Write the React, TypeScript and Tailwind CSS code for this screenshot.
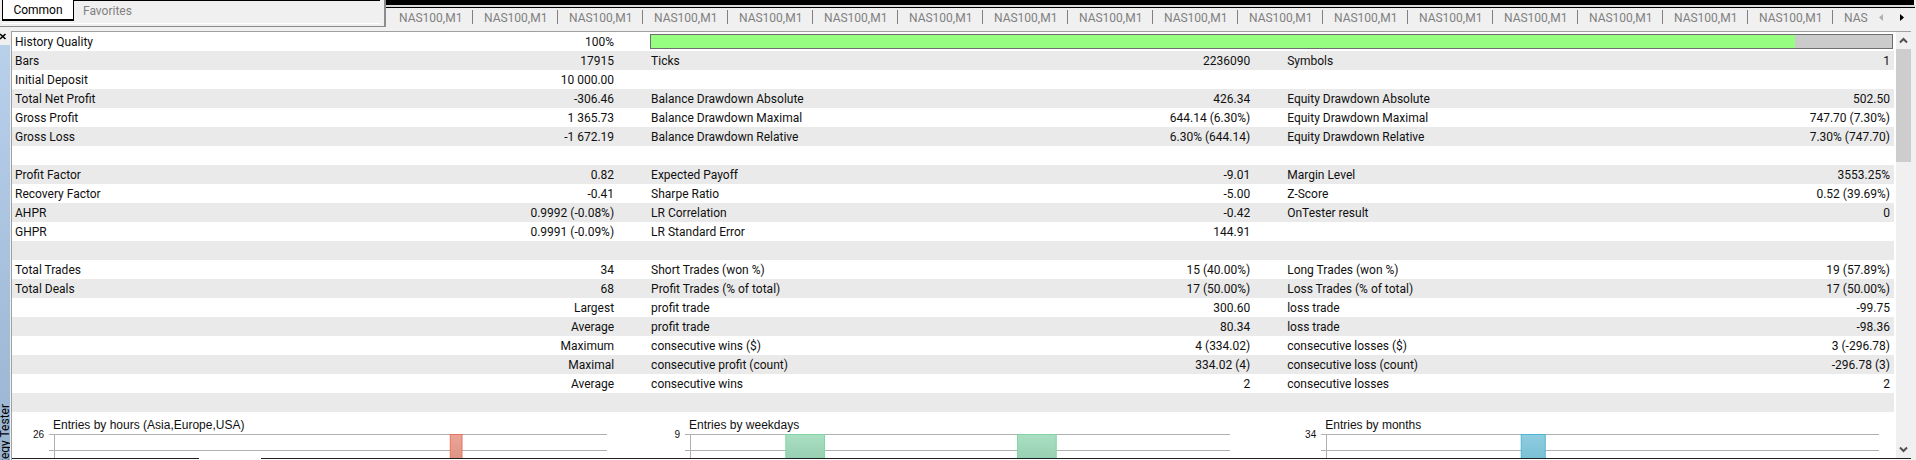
import React from "react";

type Row = [string, string, string, string, string, string];

const rows: Row[] = [
  ["Bars", "17915", "Ticks", "2236090", "Symbols", "1"],
  ["Initial Deposit", "10 000.00", "", "", "", ""],
  ["Total Net Profit", "-306.46", "Balance Drawdown Absolute", "426.34", "Equity Drawdown Absolute", "502.50"],
  ["Gross Profit", "1 365.73", "Balance Drawdown Maximal", "644.14 (6.30%)", "Equity Drawdown Maximal", "747.70 (7.30%)"],
  ["Gross Loss", "-1 672.19", "Balance Drawdown Relative", "6.30% (644.14)", "Equity Drawdown Relative", "7.30% (747.70)"],
  ["", "", "", "", "", ""],
  ["Profit Factor", "0.82", "Expected Payoff", "-9.01", "Margin Level", "3553.25%"],
  ["Recovery Factor", "-0.41", "Sharpe Ratio", "-5.00", "Z-Score", "0.52 (39.69%)"],
  ["AHPR", "0.9992 (-0.08%)", "LR Correlation", "-0.42", "OnTester result", "0"],
  ["GHPR", "0.9991 (-0.09%)", "LR Standard Error", "144.91", "", ""],
  ["", "", "", "", "", ""],
  ["Total Trades", "34", "Short Trades (won %)", "15 (40.00%)", "Long Trades (won %)", "19 (57.89%)"],
  ["Total Deals", "68", "Profit Trades (% of total)", "17 (50.00%)", "Loss Trades (% of total)", "17 (50.00%)"],
  ["", "Largest", "profit trade", "300.60", "loss trade", "-99.75"],
  ["", "Average", "profit trade", "80.34", "loss trade", "-98.36"],
  ["", "Maximum", "consecutive wins ($)", "4 (334.02)", "consecutive losses ($)", "3 (-296.78)"],
  ["", "Maximal", "consecutive profit (count)", "334.02 (4)", "consecutive loss (count)", "-296.78 (3)"],
  ["", "Average", "consecutive wins", "2", "consecutive losses", "2"],
  ["", "", "", "", "", ""],
];

const valuePadding = ["pr-[34px]", "pr-[34px]", "pr-1"];

function NavigatorTabs() {
  return (
    <div className="flex h-[27px] w-[386px] shrink-0 border-r-2 border-b border-[#8c8c8c] bg-[#f0f0f0] pr-1 pl-0.5 text-[12px]">
      <div className="flex h-[24px] w-full border-t border-b border-t-black border-b-white">
        <button className="-mt-px h-[21px] w-[72px] border-x border-b-2 border-black bg-white leading-[18px] text-black">Common</button>
        <button className="h-[19px] px-[9px] leading-[18px] text-[#808080]">Favorites</button>
      </div>
    </div>
  );
}

function ChartTabs() {
  return (
    <div className="flex min-w-0 grow flex-col bg-[#f0f0f0]">
      <div className="mr-0.5 h-[5px] bg-black" />
      <div className="mr-px h-[3px] border-b border-black bg-[#d8d8d8]" />
      <div className="flex h-[19px] items-center pr-1">
        <div className="flex min-w-0 grow overflow-hidden">
          {Array.from({ length: 18 }, (_, i) => (
            <button
              key={i}
              className={`relative h-[19px] shrink-0 pl-[13px] text-left text-[12px] leading-[20px] whitespace-nowrap text-[#808080] ${
                i > 0 ? "before:absolute before:top-[2px] before:left-px before:h-[14px] before:w-px before:bg-[#808080]" : ""
              } ${i < 17 ? "w-[85px]" : ""}`}
            >
              {i < 17 ? "NAS100,M1" : "NAS"}
            </button>
          ))}
        </div>
        <button aria-label="Previous tabs" className="flex h-[19px] w-[21px] shrink-0 items-center justify-center">
          <svg width="4" height="7" viewBox="0 0 4 7" fill="#b0b0b0"><path d="M4 0v7L0 3.5z" /></svg>
        </button>
        <button aria-label="Next tabs" className="flex h-[19px] w-[21px] shrink-0 items-center justify-center">
          <svg width="4" height="7" viewBox="0 0 4 7"><path d="M0 0v7l4-3.500z" /></svg>
        </button>
      </div>
    </div>
  );
}

function Report() {
  return (
    <table className="w-full table-fixed border-collapse text-[12px] leading-[17px] text-[#101010]">
      <colgroup>
        <col className="w-[13.8%]" />
        <col className="w-[20%]" />
        <col className="w-[13.8%]" />
        <col className="w-[20%]" />
        <col className="w-[13.8%]" />
        <col className="w-[18.6%]" />
      </colgroup>
      <tbody>
        <tr className="h-[19px]">
          <th scope="row" className="p-0 pt-0.5 pl-[3px] text-left font-normal">History Quality</th>
          <td className="p-0 pt-0.5 pr-[34px] text-right">100%</td>
          <td colSpan={4} className="p-0 pr-px pl-0.5">
            <div role="progressbar" aria-label="History Quality" aria-valuenow={100} className="h-[15px] border border-[#6e6e6e] bg-[#cbcbcb]">
              <div className="h-full w-[92.2%] bg-[#96ff82]" />
            </div>
          </td>
        </tr>
        {rows.map((row, r) => (
          <tr key={r} className="h-[19px] odd:bg-white even:bg-[#eaeaea]">
            {[0, 1, 2].map((g) => (
              <React.Fragment key={g}>
                <th scope="row" className="p-0 pt-0.5 pl-[3px] text-left font-normal whitespace-nowrap">{row[g * 2]}</th>
                <td className={`p-0 pt-0.5 text-right whitespace-nowrap ${valuePadding[g]}`}>{row[g * 2 + 1]}</td>
              </React.Fragment>
            ))}
          </tr>
        ))}
      </tbody>
    </table>
  );
}

type Bar = { left: number; width: number };

type ChartProps = { id: string; title: string; max: string; bars: Bar[]; from: string; to: string; line: string; margin: string };

function Chart({ id, title, max, bars, from, to, line, margin }: ChartProps) {
  return (
    <section className="min-w-0 pt-1 font-['Liberation_Sans',Arial,sans-serif] text-[#101010]">
      <h3 className="pl-[41px] text-[12px] leading-[18px]">{title}</h3>
      <div className="flex">
        <span className="-mt-[5px] w-8 shrink-0 text-right text-[10px] leading-3">{max}</span>
        <svg className={`ml-[5px] block h-6 min-w-0 grow ${margin}`} width="100%" height="24">
          <defs>
            <linearGradient id={id} x1="0" y1="0" x2="0" y2="1">
              <stop offset="0" stopColor={from} />
              <stop offset="1" stopColor={to} />
            </linearGradient>
          </defs>
          <path d="M0 .5H3000M0 16.500H3000M5.500 0V24" stroke="#b0b0b0" />
          {bars.map((b) => (
            <rect key={b.left} x={`${b.left}%`} y="0.5" width={`${b.width}%`} height="30" fill={`url(#${id})`} stroke={line} />
          ))}
        </svg>
      </div>
    </section>
  );
}

function Scrollbar() {
  return (
    <div className="flex w-[15px] shrink-0 flex-col bg-[#f0f0f0]">
      <button aria-label="Scroll up" className="flex h-[17px] items-center justify-center">
        <svg width="9" height="7" viewBox="0 0 9 7" fill="none" stroke="#505050" strokeWidth="2"><path d="M1 5.500 4.500 2 8 5.500" /></svg>
      </button>
      <div className="h-[113px] bg-[#cdcdcd]" />
      <div className="grow" />
      <button aria-label="Scroll down" className="flex h-[17px] items-center justify-center">
        <svg width="9" height="7" viewBox="0 0 9 7" fill="none" stroke="#505050" strokeWidth="2"><path d="M1 1.500 4.500 5 8 1.500" /></svg>
      </button>
    </div>
  );
}

export default function App() {
  return (
    <div className="flex h-screen flex-col overflow-hidden bg-[#f0f0f0] font-['Roboto','Noto_Sans',sans-serif]">
      <header className="flex h-[27px] shrink-0">
        <NavigatorTabs />
        <ChartTabs />
      </header>
      <main className="flex min-h-0 grow pt-1">
        <aside className="flex w-[11px] shrink-0 flex-col overflow-hidden">
          <button aria-label="Close" className="h-[14px] shrink-0">
            <svg width="7" height="14" viewBox="0 0 7 14" stroke="#000" strokeWidth="1.6"><path d="M0 3 5.500 8M5.500 3 0 8" /></svg>
          </button>
          <div className="flex w-[10px] grow items-end justify-center overflow-hidden bg-linear-to-b from-[#b9d0eb] to-[#99b4d1]">
            <span className="-mb-6 rotate-180 text-[12px] leading-[14px] whitespace-nowrap [writing-mode:vertical-rl]">Strategy Tester</span>
          </div>
        </aside>
        <div className="mr-[5px] flex min-w-0 grow flex-col border-t border-l border-[#a0a0a0] bg-white">
          <div className="flex min-h-0 grow">
            <div className="flex min-w-0 grow flex-col overflow-hidden">
              <Report />
              <div className="grid grow grid-cols-[33.8%_33.8%_32.4%] overflow-hidden">
                <Chart id="hours" title="Entries by hours (Asia,Europe,USA)" max="26" bars={[{ left: 71.9, width: 2.1 }]} from="#eaa598" to="#dc9080" line="#e8735c" margin="mr-[41px]" />
                <Chart id="weekdays" title="Entries by weekdays" max="9" bars={[{ left: 18.5, width: 7.1 }, { left: 61, width: 7.1 }]} from="#aadfc2" to="#93ccae" line="#7fd6a4" margin="mr-[54px]" />
                <Chart id="months" title="Entries by months" max="34" bars={[{ left: 35.9, width: 4.3 }]} from="#90cde0" to="#74bdd3" line="#4fb6d3" margin="mr-[15px]" />
              </div>
            </div>
            <div className="w-0.5 shrink-0" />
            <Scrollbar />
          </div>
          <div className="flex h-px shrink-0">
            <div className="w-[187px] bg-[#202020]" />
            <div className="w-[62px]" />
            <div className="grow bg-[#202020]" />
          </div>
          <div className="h-px shrink-0 bg-white" />
        </div>
      </main>
    </div>
  );
}
